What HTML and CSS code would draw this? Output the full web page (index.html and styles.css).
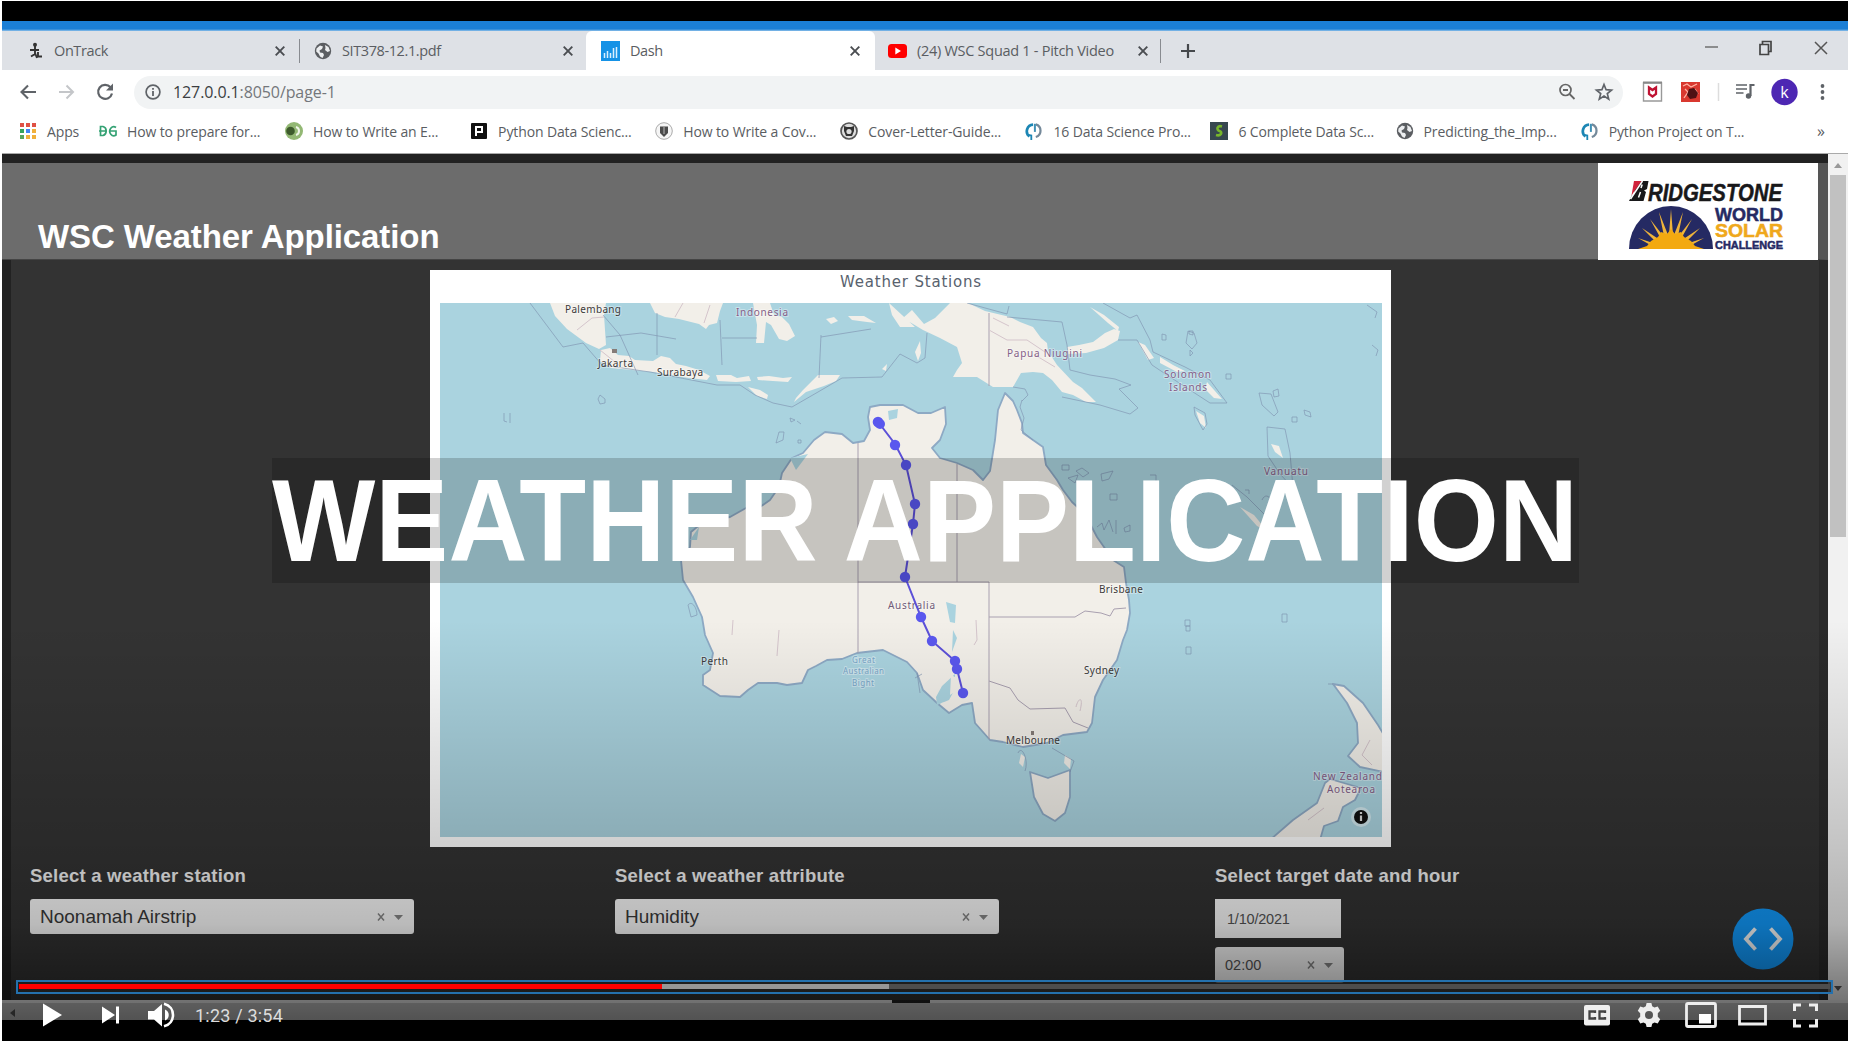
FILE: index.html
```html
<!DOCTYPE html>
<html lang="en">
<head>
<meta charset="utf-8">
<title>WSC Weather Application</title>
<link rel="stylesheet" href="styles.css">
</head>
<body>
<svg class="defs" width="0" height="0">
  <symbol id="globe" viewBox="0 0 18 18"><circle cx="9" cy="9" r="8.2" fill="#5b5e62"/><path d="M2.500 6.500 6 3.500 9 4.500 8 7 5.500 8.500 6 10.500 9 11 10 13 8.500 16 6 14.500 4.500 11.500 2.200 9.500zM11 3l3.500 2 1.500 4-2.500 1-2.500-2 .5-2z" fill="#eceef0"/></symbol>
  <symbol id="close" viewBox="0 0 12 12"><path d="M1.700 1.700 10.300 10.300M10.300 1.700 1.700 10.300" stroke="#4a4d51" stroke-width="1.900" fill="none"/></symbol>
  <symbol id="power" viewBox="0 0 18 20"><path d="M8 3A7.200 7.200 0 0 0 4 16" fill="none" stroke="#1c86b4" stroke-width="3"/><path d="M1 14l5 1v5" fill="none" stroke="#1c86b4" stroke-width="2"/><path d="M11 2.700a7.300 7.300 0 0 1 0 14" fill="none" stroke="#74899a" stroke-width="2.500"/><path d="M10 2v9" stroke="#3f90b5" stroke-width="2.200"/></symbol>
</svg>

<div class="screen">
  <div class="letterbox"></div>
  <div class="accent"></div>

  <div class="tabs">
    <div class="tab tab-a">
      <svg class="fav" viewBox="0 0 16 18"><circle cx="8" cy="2.700" r="2" fill="#333"/><path d="M8 4v8M3 8H12M8 12l-4 2.500M8 11l2 5M11 10v4.500M10 14.500h5" stroke="#333" stroke-width="1.900" fill="none"/></svg>
      <span class="t1">OnTrack</span><svg class="x"><use href="#close"/></svg>
    </div>
    <div class="tab tab-b">
      <svg class="fav"><use href="#globe"/></svg>
      <span class="t2">SIT378-12.1.pdf</span><svg class="x"><use href="#close"/></svg>
    </div>
    <div class="tab tab-on">
      <svg class="fav dash" viewBox="0 0 19 20"><path d="M0 0h19v20H0z" fill="#1592e6"/><path d="M3.500 12v5M6.500 10v7M9.500 12v5M12.500 7v10M15.500 6v11" stroke="#d9f0ff" stroke-width="1.500"/></svg>
      <span>Dash</span><svg class="x"><use href="#close"/></svg>
    </div>
    <div class="tab tab-c">
      <svg class="fav yt" viewBox="0 0 19 14"><rect width="19" height="14" rx="3.500" fill="#f00"/><path d="M7.300 3.600v6.800L13 7z" fill="#fff"/></svg>
      <span class="t4">(24) WSC Squad 1 - Pitch Video</span><svg class="x"><use href="#close"/></svg>
    </div>
    <svg class="plus" viewBox="0 0 16 16"><path d="M8 1v14M1 8h14" stroke="#45484c" stroke-width="2.200"/></svg>
    <svg class="winctl" viewBox="0 0 130 20"><path d="M3 9h13" stroke="#777" stroke-width="1.600"/><path d="M58 6.500h8.500v10H58zM60.500 6V3.500H69v10h-2.500" fill="none" stroke="#444" stroke-width="1.700"/><path d="M113 4l12 12M125 4l-12 12" stroke="#555" stroke-width="1.500"/></svg>
  </div>

  <div class="toolbar">
    <svg class="nav" viewBox="0 0 110 24"><path d="M17 12H3M9 5.500 2.500 12 9 18.500" fill="none" stroke="#5f6368" stroke-width="2.100"/><path d="M40 12h14M47.500 5.500 54 12l-6.500 6.500" fill="none" stroke="#c4c6c9" stroke-width="2"/><path d="M91.500 7.200A7 7 0 1 0 93 13.500" fill="none" stroke="#5f6368" stroke-width="2.200"/><path d="M94 3.500v7h-7z" fill="#5f6368"/></svg>
    <div class="omnibox">
      <svg class="info" viewBox="0 0 16 16"><circle cx="8" cy="8" r="6.900" fill="none" stroke="#5f6368" stroke-width="1.700"/><path d="M8 7v5M8 4v1.800" stroke="#5f6368" stroke-width="1.800"/></svg>
      <span class="url"><b>127.0.0.1</b>:8050/page-1</span>
      <svg class="omni-end" viewBox="0 0 56 22"><circle cx="7.500" cy="9" r="5.500" fill="none" stroke="#666" stroke-width="1.700"/><path d="M11.500 13l5 5M5 9h5" stroke="#666" stroke-width="1.800"/><path d="M46 3.500l2.100 5.200 5.400.4-4.200 3.500 1.400 5.500-4.700-3-4.700 3 1.400-5.500-4.200-3.500 5.400-.4z" fill="none" stroke="#5f6368" stroke-width="1.700"/></svg>
    </div>
    <svg class="ext" viewBox="0 0 190 30">
      <path d="M2.500 6h18v18h-18z" fill="#fff" stroke="#999" stroke-width="1.400"/><path d="M2 5.500h19" stroke="#888" stroke-width="2"/><path d="M8 10.500v6.500l3.500 2.500 3.500-2.500v-6.500l-3.500 2.500z" fill="none" stroke="#c01232" stroke-width="2.300"/>
      <path d="M40 5h19v20H40z" fill="#d9382f"/><path d="M42 9l4-2 4 3 6-3M43 21l4-6-3-3M54 12l3 5" stroke="#ffb3a4" stroke-width="1.300" fill="none"/><path d="M48 12l5-1 4 5-2 5-6 1-3-4z" fill="#4f1114"/>
      <path d="M77.500 6v18" stroke="#ddd" stroke-width="1.500"/>
      <path d="M95 8h11M95 12h11M95 16h7.500" stroke="#5f6368" stroke-width="1.700"/><path d="M109.500 7v12M109.500 8h4" stroke="#5f6368" stroke-width="2.200"/><circle cx="107.500" cy="19" r="2.700" fill="#5f6368"/>
      <circle cx="143.500" cy="15" r="13.200" fill="#4d27b3"/><text x="143.500" y="20.500" text-anchor="middle" class="avatar">k</text>
      <circle cx="181.500" cy="9" r="1.900" fill="#5f6368"/><circle cx="181.500" cy="15" r="1.900" fill="#5f6368"/><circle cx="181.500" cy="21" r="1.900" fill="#5f6368"/>
    </svg>
  </div>

  <div class="bookmarks">
    <div class="bm apps"><svg class="ic" viewBox="0 0 18 18"><path d="M1 1h4v4H1zM7 1h4v4H7zM13 1h4v4h-4z" fill="#df5145"/><path d="M1 7h4v4H1z" fill="#36a35b"/><path d="M7 7h4v4H7z" fill="#4285f4"/><path d="M13 7h4v4h-4zM13 13h4v4h-4zM7 13h4v4H7z" fill="#f0b03c"/><path d="M1 13h4v4H1z" fill="#5aa55d"/></svg><span>Apps</span></div>
    <div class="bm gfg"><svg class="ic" viewBox="0 0 18 18"><path d="M0 9h8M1.500 9V4.500H4a4 4.600 0 0 1 0 9H1.500V9M17 5.500a4 4.500 0 1 0 0 7.500V9h-7" fill="none" stroke="#35a274" stroke-width="1.700"/></svg><span>How to prepare for...</span></div>
    <div class="bm"><svg class="ic" viewBox="0 0 18 18"><circle cx="9" cy="9" r="9" fill="#93b874"/><circle cx="5.500" cy="9" r="4.300" fill="#3d5a2c"/><path d="M11 5c4 1 4 7 0 8" fill="none" stroke="#f0f6ea" stroke-width="2"/></svg><span>How to Write an E...</span></div>
    <div class="bm"><svg class="ic" viewBox="0 0 18 18"><rect x="1" y="1" width="16" height="16" rx="1" fill="#111"/><path d="M6 14V5h6v5H7" fill="none" stroke="#fff" stroke-width="2"/></svg><span>Python Data Scienc...</span></div>
    <div class="bm"><svg class="ic" viewBox="0 0 18 18"><circle cx="9" cy="9" r="8.300" fill="#f5f5f5" stroke="#aaa"/><path d="M5 4.500h8V11l-4 4-4-4z" fill="#4b4b4b"/><path d="M9 5v7" stroke="#bbb"/></svg><span>How to Write a Cov...</span></div>
    <div class="bm"><svg class="ic" viewBox="0 0 18 18"><circle cx="9" cy="9" r="8" fill="#ddd" stroke="#555" stroke-width="1.700"/><path d="M4 4l3 1h4l3-1v5l-2 5H6L4 9z" fill="#333"/><circle cx="9" cy="9.500" r="2.600" fill="#ddd"/></svg><span>Cover-Letter-Guide...</span></div>
    <div class="bm"><svg class="ic"><use href="#power"/></svg><span>16 Data Science Pro...</span></div>
    <div class="bm"><svg class="ic" viewBox="0 0 18 18"><path d="M0 0h18v18H0z" fill="#37474f"/><path d="M12 4.500C7 3 6 8 9.500 9S11 14.500 6 13" fill="none" stroke="#77b62b" stroke-width="2.600"/></svg><span>6 Complete Data Sc...</span></div>
    <div class="bm"><svg class="ic"><use href="#globe"/></svg><span>Predicting_the_Imp...</span></div>
    <div class="bm"><svg class="ic"><use href="#power"/></svg><span>Python Project on T...</span></div>
    <div class="more">»</div>
  </div>

  <div class="window">
    <div class="page">
      <header class="header">
        <h1>WSC Weather Application</h1>
        <div class="logo">
          <svg viewBox="0 0 220 97" width="220" height="97">
            <text x="50" y="37.500" textLength="134" lengthAdjust="spacingAndGlyphs" class="brand">RIDGESTONE</text>
            <path d="M36 18h14.500l-1.500 8-3 1.500 2 1.500-2.500 9H31l3-6 2.500-1z" fill="#18181a"/><path d="M36 18h7.500L33.500 32.500z" fill="#d0233c"/><path d="M44.500 18 32.500 36M40.500 34.500l2-5.500M43 25l1.200-3.500" stroke="#fff" stroke-width="1.500"/>
            <path d="M31 86a42 43 0 0 1 84 0z" fill="#252a63"/>
            <path d="M73 46l2 26h-4zM61 49l9 23-4 1zM85 49l-9 23 4 1zM52 56l14 18-3 2zM94 56 80 74l3 2zM44 65l18 12-3 3zM102 65 84 77l3 3zM40 75l18 6-2 3zM106 75l-18 6 2 3z" fill="#efb43a"/>
            <path d="M40 86l9-3 4-5 7-4 3-5 6 2 4-5 4 5 6-2 3 5 7 4 4 5 9 3z" fill="#f3a910"/>
            <text x="117" y="58" textLength="68" lengthAdjust="spacingAndGlyphs" class="wsc navy">WORLD</text>
            <text x="117" y="74" textLength="68" lengthAdjust="spacingAndGlyphs" class="wsc gold">SOLAR</text>
            <text x="117" y="85.500" textLength="68" lengthAdjust="spacingAndGlyphs" class="wsc small navy">CHALLENGE</text>
          </svg>
        </div>
      </header>

      <main class="main">
        <section class="card">
          <h2>Weather Stations</h2>
          <svg class="map" viewBox="440 303 942 534" width="942" height="534">
            <path fill="#aad3df" d="M440 303h942v534H440z"/>
            <g class="land">
              <path d="M550 303h56l-2 12 2 30-7 4-13-6-19-14-12-13z"/>
              <path d="M650 303h73l-3 8-3 12-8 2-3 4-7-5-20-5-14-2-10-4z"/>
              <path d="M753 303h17l4 12 8 2 7 7 6 12-8 5-8-2-8-14-5-3-2 21h-8l1-18z"/>
              <path d="M601 350l9-2 8 7 11 1 6 4 18 1 8-5 9 2 6 6 10 2 13 4 11 6-3 4-18-2-36-6-42-4-11-7z"/>
              <path d="M716 375h15l6 3 12-2 2 5-15 1-18-1zM757 377l12-1 14 2 9-1-4 5-15-1-15-1zM748 387l12 3 8 5-1 4-10-3zM796 398l7-8 9-9 6-6 22 0-4 6-12 5-18 6-12 10zM826 319l8-2 4 4-7 3zM848 316h16l12 7-9-1-15-2zM882 369l5-5-1 7z"/>
              <path d="M889 303L915 327L900 327L892 315ZM903 318L912 310L924 324L935 318L950 303L968 303L985 311L1010 317L1020 322L1033 327L1041 338L1047 343L1048 351L1057 365L1073 382L1082 388L1096 402L1086 402L1073 395L1062 392L1052 380L1043 373L1033 372L1021 373L1013 387L993 387L977 377L953 377L957 370L962 363L957 347L940 338L923 330Z"/>
              <path d="M1067 347l12-2 14-3 12-9 9-4 6 2-2 9-14 8-18 5-18 1zM1138 342l7 3 9 13-6 2zM1160 357l13 8 12 6-8 1-17-9zM1207 382l15 17-8-1-9-9zM915 352l5-11 1 12-3 8zM1090 307l14 8 15 12-1 4-10-8z"/>
              <path class="coast" d="M870 407L880 405L903 405L918 413L931 413L945 407L946 424L940 440L932 448L940 458L957 463L973 470L983 480L990 471L995 440L998 410L1005 393L1013 401L1017 410L1022 423L1023 433L1033 440L1043 447L1046 465L1057 480L1063 490L1072 502L1085 514L1097 537L1113 560L1124 567L1126 583L1129 600L1130 613L1127 630L1123 640L1117 660L1103 680L1095 697L1092 723L1087 732L1063 735L1047 743L1023 747L1003 742L990 740L975 723L972 703L962 705L949 713L937 703L923 690L917 673L907 662L897 657L883 650L857 653L842 659L827 660L816 666L808 670L802 683L787 685L777 683L758 683L748 690L740 697L720 696L703 685L703 675L710 670L713 653L705 635L702 617L693 597L683 580L681 560L690 547L691 532L697 527L711 520L730 517L746 508L760 507L770 500L779 487L782 473L792 458L803 453L814 440L825 432L842 434L853 443L864 441L870 430L868 417Z"/>
              <path class="coast" d="M1030 772l18 6 22-8 0 27-5 16-10 8-12-7-9-17z"/>
              <path class="coast" d="M1333 684L1344 686L1363 703L1378 725L1384 735L1384 772L1360 767L1348 756L1358 743L1357 723L1347 703Z"/>
              <path class="coast" d="M1330 779L1361 788L1355 800L1343 807L1338 821L1324 826L1320 840L1270 840L1293 820L1317 803L1325 783Z"/>
            </g>
            <path fill="#aad3df" d="M936 697l6-11 13-12 0 15-6 11-12 5zM946 602l10 3-1 18-5-1zM953 630l4 8-5 14zM888 411l10-2-1 9-8 2zM690 540l9-13-2 13zM790 458l18-4-12 16z"/>
            <path fill="#f2efe9" d="M951 675l6 3-2 14-5 3zM941 703l11-2 4 4-9 3zM1021 754l4 3-2 10-4-4zM1065 755l6 4-1 10-6-6zM1271 444l8 2 4 12-8-6zM1240 507l14 8 13 16-10-5zM1196 411l8 5 2 12-6-5z"/>
            <g class="sea">
              <path d="M530 303L563 347L583 343L602 365L650 372L717 385L740 385L755 395L773 403L792 407L818 392L842 378L882 377L900 354L917 363L925 358L927 333M603 315l17 20 18 40M657 313v42M720 320l2 45M821 335l-2 43M606 337l35-4 35 6M722 338h35M821 337l50-8"/>
              <path d="M967 303l40 11 2-8M1007 317L1062 322L1067 345L1070 370L1090 375L1115 379L1131 385L1119 389L1138 408L1130 414L1100 405L1062 397M1103 303L1130 318L1137 315L1150 340L1153 352L1185 367L1210 380L1227 403L1210 403L1170 377L1152 365L1137 340L1118 340M1022 400L1020 407L1024 418L1021 430L1033 440M1013 387l12 2 3 6-6 6"/>
              <path d="M1194 407l11 6 2 11-4 6-8-15zM1259 393l12 1 7 18-4 4-12-11zM1267 427l18 2 5 24 3 35-13-14-12-18zM1273 391l5-2 1 7-5 1zM1292 417h5v5h-5zM1304 410l6 2 1 5-6-2zM1188 331l6 2 3 10-5 6-6-6zM1190 350l3 3-3 3zM1189 334v-3h4v4zM1162 334l4 1 0 5-4 0zM1226 374h5v5h-5zM1367 305l10 7-2 6M1372 345l6 5-2 6M600 395l5 4 0 4-5 1-2-5zM504 413v8l3 1M510 413v10M790 418l5 2-4 2zM797 421l4 3M776 443l7-3 1-8-5 0zM798 440h3v3h-3zM1062 465h7v5h-7zM1076 471l6-3 7 5-6 4zM1101 474l12-3-4 8-7 2zM1068 478l10-3-3 8zM1110 494h7v6h-7zM1150 475h6v6M1232 485l15 12 20 20M1245 490h4v4M1262 500c4-9 12-1 8 8M1097 527l5-4 2 7 5-10 4 12M1116 520v14M1124 528l6-3 0 6-5 1zM1185 620h5v6h-5zM1186 626h4v5h-4zM1186 647h5v7h-5zM1282 614h5v8h-5zM688 605c4-5 9 3 9 10l-6 2zM1052 748l22 13-4 11M1018 753c4-9 11 8 7 18M1328 684h5M917 673l3 20M915 678l7-4"/>
            </g>
            <g class="borders">
              <path d="M858 443v210M957 464v118M858 582h131M989 582v157M989 617h86l10-6 16 2 9 3 4-7 12-1M989 681l21 7 8 12 12 9 35-1 8 14 15 6M989 313v73" />
              <path class="faint" d="M989 330l18 10 20 0 18 12M993 318l16 8M1035 355l20 12M577 330l15-12 12-1M600 350l20 16M683 303l-8 14M710 305l-6 18M733 620l-1 15M779 630l-2 26M1370 740l-8 15 10 10M1308 820l16-12M1076 707c2-9 8-12 4 4M976 620l1 20-3 5"/>
            </g>
            <g class="lbl">
              <text x="565" y="313" textLength="56">Palembang</text><text x="598" y="367" textLength="35">Jakarta</text><text x="657" y="376" textLength="46">Surabaya</text>
              <text x="701" y="665" textLength="27">Perth</text><text x="1099" y="593" textLength="44">Brisbane</text><text x="1084" y="674" textLength="35">Sydney</text><text x="1006" y="744" textLength="54">Melbourne</text>
              <g class="country"><text x="736" y="316" textLength="52">Indonesia</text><text x="1007" y="357" textLength="75">Papua Niugini</text><text x="1164" y="378" textLength="47">Solomon</text><text x="1169" y="391" textLength="38">Islands</text><text x="1264" y="475" textLength="44">Vanuatu</text><text x="1313" y="780" textLength="69">New Zealand</text><text x="1327" y="793" textLength="48">Aotearoa</text></g>
              <text class="au" x="888" y="609" textLength="47">Australia</text>
              <g class="water"><text x="852" y="663" textLength="23">Great</text><text x="843" y="674" textLength="41">Australian</text><text x="852" y="686" textLength="22">Bight</text></g>
            </g>
            <path d="M612 349h5v4h-5zM1031 731h3v4h-3z" fill="#857c78"/>
            <polyline class="route" points="879,423 895,444 906,465 915,504 913,524 905,577 921,617 932,641 955,661 957,669 963,693"/>
            <g class="stops"><circle cx="878" cy="422" r="5.300"/><circle cx="880" cy="424" r="5"/><circle cx="895" cy="445" r="5.200"/><circle cx="906" cy="465" r="5.200"/><circle cx="915" cy="504" r="5.200"/><circle cx="913" cy="524" r="5.200"/><circle cx="905" cy="577" r="5.200"/><circle cx="921" cy="617" r="5.200"/><circle cx="932" cy="641" r="5.200"/><circle cx="955" cy="661" r="5.200"/><circle cx="957" cy="669" r="5.200"/><circle cx="963" cy="693" r="5.200"/></g>
            <circle cx="1361" cy="817" r="10" fill="#fff" opacity=".45"/><circle cx="1361" cy="817" r="7" fill="#111"/><path d="M1361 815.500v5.500M1361 812v2" stroke="#ddd" stroke-width="2.200"/>
          </svg>
        </section>

        <section class="filters">
          <div class="field">
            <label>Select a weather station</label>
            <div class="select"><span>Noonamah Airstrip</span><svg class="ctl" viewBox="0 0 26 12"><path d="M1 2.500l6 7M7 2.500l-6 7" stroke="#888" stroke-width="1.500"/><path d="M17 4h9l-4.500 5z" fill="#888"/></svg></div>
          </div>
          <div class="field">
            <label>Select a weather attribute</label>
            <div class="select"><span>Humidity</span><svg class="ctl" viewBox="0 0 26 12"><path d="M1 2.500l6 7M7 2.500l-6 7" stroke="#888" stroke-width="1.500"/><path d="M17 4h9l-4.500 5z" fill="#888"/></svg></div>
          </div>
          <div class="field">
            <label>Select target date and hour</label>
            <div class="date">1/10/2021</div>
            <div class="select hour"><span>02:00</span><svg class="ctl" viewBox="0 0 26 12"><path d="M1 2.500l6 7M7 2.500l-6 7" stroke="#888" stroke-width="1.500"/><path d="M17 4h9l-4.500 5z" fill="#888"/></svg></div>
          </div>
          <svg class="devtools" viewBox="0 0 62 62"><circle cx="31" cy="31" r="30.500" fill="#129cff"/><path d="M23.500 20.500 14 31l9.500 10.500M38.500 20.500 48 31l-9.500 10.500" fill="none" stroke="#fff" stroke-width="3.800"/></svg>
        </section>
      </main>
    </div>
    <div class="vscroll"><i class="up"></i><i class="thumb"></i><i class="down"></i></div>
  </div>
  <div class="hscroll"><i class="left"></i><i class="track"></i></div>

  <div class="shade"></div>
  <div class="caption"><span>WEATHER APPLICATION</span></div>

  <div class="player">
    <div class="progress"><i class="played"></i><i class="loaded"></i></div>
    <div class="controls">
      <svg class="left-ctl" viewBox="0 0 140 28"><path d="M1 2.500v23L20 14z" fill="#fff"/><path d="M60 5.500v17l13-8.500zM74 5.500h3v17h-3z" fill="#fff"/><path d="M106 10v8.500h6l8 7V3l-8 7zM123 8.500v11c5-2 5-9 0-11z" fill="#fff"/><path d="M122 2.700c12 3 12 19.500 0 22.600" fill="none" stroke="#fff" stroke-width="2.600"/></svg>
      <span class="time">1:23 / 3:54</span>
      <svg class="right-ctl" viewBox="0 0 236 28">
        <rect x="1" y="4" width="26" height="20.500" rx="2" fill="#eee"/><path d="M12 12v-1.500H6.500v7H12V16M22 12v-1.500h-5.500v7H22V16" fill="none" stroke="#444" stroke-width="2.300"/>
        <g transform="translate(66 14)" fill="#eee"><path fill-rule="evenodd" d="M-2.400-12h4.800l.8 3.300 2.300 1.300 3.200-1 2.500 4.200-2.400 2.400v3.600l2.400 2.400-2.500 4.200-3.200-1-2.300 1.300L2.400 12h-4.800l-.8-3.300-2.300-1.300-3.200 1-2.500-4.200 2.400-2.400v-3.600l-2.400-2.400 2.500-4.200 3.200 1 2.300-1.300zM0-4a4 4 0 1 0 0 8a4 4 0 1 0 0-8z"/></g>
        <rect x="103.500" y="2.500" width="29" height="23" rx="1.500" fill="none" stroke="#eee" stroke-width="2.800"/><path d="M116 13h12v9.500h-12z" fill="#fff"/>
        <path d="M156.500 5.500h26v17.500h-26z" fill="none" stroke="#eee" stroke-width="2.800"/>
        <path d="M211.500 10V4H218M226 4h7.500v6M233.500 18v7H226M218 25h-6.500v-7" fill="none" stroke="#eee" stroke-width="3"/>
      </svg>
    </div>
  </div>
</div>
</body>
</html>
```
FILE: styles.css
```css
* { box-sizing: border-box; }
body { margin: 0; background: #fff; font-family: "Liberation Sans", Arial, sans-serif; overflow: hidden; }
.defs { position: absolute; }
.screen { position: relative; width: 1846px; height: 1040px; margin: 1px 0 0 2px; background: #000; display: flex; flex-direction: column; overflow: hidden; }
.letterbox { height: 20px; flex: none; }
.accent { height: 10px; flex: none; background: linear-gradient(#1b7fd6 80%, #8fc1ea); }

.tabs, .toolbar, .bookmarks { font-family: "Open Sans", "Noto Sans", sans-serif; color: #5a5d62; display: flex; align-items: center; flex: none; }
.tabs { height: 39px; background: #dee1e6; font-size: 14.5px; }
.tab { display: flex; align-items: center; height: 39px; white-space: nowrap; }
.tab .fav { width: 18px; height: 18px; flex: none; }
.tab .x { width: 12px; height: 12px; margin-left: auto; flex: none; }
.tab span { letter-spacing: -0.4px; margin: -1px 0 0 10px; }
.tab-a { width: 298px; padding: 0 14px 0 24px; }
.tab-a::after, .tab-c::after { content: ""; width: 1px; height: 24px; background: #888b90; margin-left: 13px; margin-right: -14px; }
.tab-b { width: 286px; padding: 0 12px 0 14px; }
.tab-on { width: 289px; background: #fff; border-radius: 6px 6px 0 0; padding: 0 14px 0 15px; }
.tab .dash { width: 19px; height: 20px; }
.tab-c { width: 286px; padding: 0 14px 0 13px; border-radius: 0 0 0 6px; }
.tab-c .x { margin-right: -2px; }
.tab-c .t4 { letter-spacing: -0.28px; }
.tab .yt { width: 19px; height: 14px; }
.plus { width: 16px; height: 16px; margin-left: 19px; }
.winctl { width: 130px; height: 20px; margin: 0 16px 5px auto; }

.toolbar { height: 44px; background: #fff; }
.nav { width: 110px; height: 24px; margin-left: 17px; }
.omnibox { width: 1489px; height: 33px; margin-left: 5px; border-radius: 17px; background: #f1f3f4; display: flex; align-items: center; padding: 0 9px 0 11px; }
.info { width: 16px; height: 16px; }
.url { font-size: 16px; margin-left: 12px; color: #74777b; letter-spacing: -0.1px; }
.url b { font-weight: 400; color: #3b3e42; }
.omni-end { width: 56px; height: 22px; margin-left: auto; }
.ext { width: 190px; height: 30px; margin-left: 18px; }
.avatar { font: 16px "Open Sans", sans-serif; fill: #fff; }

.bookmarks { height: 40px; background: #fff; border-bottom: 1px solid #aaa; font-size: 14px; padding-bottom: 5px; }
.bm { width: 185.100px; display: flex; align-items: center; flex: none; white-space: nowrap; }
.bm .ic { width: 18px; height: 18px; flex: none; margin-right: 10px; }
.bm span { letter-spacing: -0.12px; }
.bm.apps { width: 97px; padding-left: 17px; }
.bm.gfg { width: 186px; }
.more { font-size: 16px; margin-left: auto; padding-right: 23px; }

.window { display: flex; height: 846px; flex: none; }
.page { width: 1826px; background: #333; border-top: 9px solid #222; overflow: hidden; }
.header { height: 97px; background: #6c6c6c; display: flex; justify-content: space-between; border-right: 10px solid #555; border-bottom: 1px solid #444; }
h1 { margin: 53px 0 0 36px; color: #fff; font-size: 33px; line-height: 41px; font-weight: 700; white-space: nowrap; letter-spacing: -0.08px; }
.logo { width: 220px; height: 97px; background: #fff; }
.brand { font: italic 700 23px "Liberation Sans", sans-serif; fill: #18181a; stroke: #18181a; stroke-width: .5; }
.wsc { font: 700 18px "Liberation Sans", sans-serif; }
.small { font-size: 11px; }
.navy { fill: #252a63; stroke: #252a63; stroke-width: .5; }
.gold { fill: #efa81c; stroke: #efa81c; stroke-width: .5; }
.main { height: 740px; border-left: 9px solid #222; border-right: 9px solid #2a2a2a; padding-top: 10px; }
.card { width: 961px; height: 577px; margin-left: 419px; background: #fff; padding: 0 9px 0 10px; }
h2 { margin: 0; height: 33px; font: 400 15px/25px "DejaVu Sans", sans-serif; color: #58626e; text-align: center; letter-spacing: .8px; }
.map { display: block; }
.land path { fill: #f2efe9; }
.land .coast { stroke: #8da9c4; stroke-width: 1.800; stroke-linejoin: round; }
.sea path { fill: none; stroke: #7f93b0; stroke-width: 1; opacity: .65; }
.borders path { fill: none; stroke: #a9a0b0; stroke-width: 1; }
.borders .faint { stroke: #d5c5cc; }
.lbl { font: 10px "Noto Sans", "DejaVu Sans", sans-serif; fill: #3c3a3a; stroke: #fff; stroke-opacity: .35; stroke-width: 2; paint-order: stroke; }
.country { fill: #855f88; }
.au { fill: #705b78; }
.water { fill: #78a5c8; font-size: 8px; }
.route { fill: none; stroke: #5c50d8; stroke-width: 2; }
.stops { fill: #5a57ee; }

.filters { position: relative; display: grid; grid-template-columns: 585px 600px 1fr; padding: 16px 0 0 19px; }
label { display: block; height: 36px; line-height: 26px; font-size: 18.500px; font-weight: 700; color: #f4f4f4; white-space: nowrap; letter-spacing: .22px; }
.select { width: 384px; height: 35px; background: #fff; border-radius: 3px; display: flex; align-items: center; justify-content: space-between; padding: 0 11px 0 10px; font-size: 19px; color: #3a3a3a; }
.ctl { width: 26px; height: 12px; }
.date { width: 126px; height: 39px; background: #fff; padding-left: 12px; font-size: 14.500px; line-height: 40px; color: #555; letter-spacing: -.2px; }
.hour { width: 129px; height: 36px; margin-top: 9px; font-size: 14.500px; color: #555; }
.devtools { position: absolute; width: 62px; height: 62px; right: 25px; top: 61px; }

.vscroll { width: 20px; background: #f1f1f1; display: flex; flex-direction: column; align-items: center; }
.vscroll i { display: block; flex: none; }
.up { border: 4px solid transparent; border-bottom: 5px solid #999; border-top: 0; margin-top: 9px; }
.thumb { width: 16px; height: 362px; background: #c1c1c1; margin-top: 7px; }
.down { border: 4px solid transparent; border-top: 5px solid #555; border-bottom: 0; margin: auto 0 9px; }
.hscroll { height: 20px; flex: none; background: #c4c4c4; display: flex; align-items: flex-start; border-top: 3px solid #ececec; }
.left { border: 4px solid transparent; border-right: 5px solid #555; border-left: 0; margin: 6px 0 0 8px; }
.track { width: 38px; height: 3px; background: #222; margin-left: 877px; margin-top: -3px; }

.shade { position: absolute; left: 0; right: 0; top: 619px; height: 400px; background: linear-gradient(rgba(0,0,0,0), rgba(0,0,0,.19) 57%, rgba(0,0,0,.27) 76%, rgba(0,0,0,.58)); }
.caption { position: absolute; left: 270px; top: 457px; width: 1307px; height: 125px; background: rgba(0,0,0,.18); color: #fff; font-size: 117px; line-height: 125px; font-weight: 700; white-space: nowrap; }
.caption span { display: inline-block; transform: scaleX(.936); transform-origin: 0 50%; }
.player { position: absolute; left: 14px; right: 15px; top: 979px; }
.progress { height: 14px; border: 2px solid #2471ae; display: flex; padding: 2px 1px 3px; background: rgba(30,30,30,.7); }
.progress::after { content: ""; flex: 1; background: #4d4d4d; }
.played { width: 643px; background: #f00; }
.loaded { width: 227px; background: #969696; }
.controls { display: flex; align-items: center; height: 28px; margin-top: 7px; padding: 0 14px 0 26px; }
.left-ctl { width: 140px; height: 28px; }
.time { color: #ddd; font: 18px Roboto, sans-serif; margin-left: 13px; letter-spacing: .2px; }
.right-ctl { width: 236px; height: 28px; margin-left: auto; }
```
